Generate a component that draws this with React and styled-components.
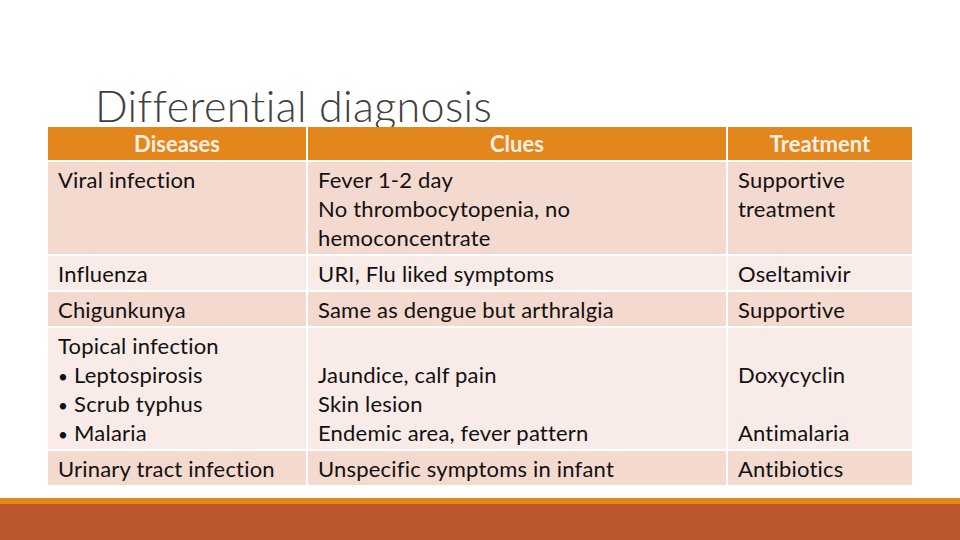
import React from 'react';
import styled, { createGlobalStyle } from 'styled-components';

const Global = createGlobalStyle`
  html, body { margin: 0; padding: 0; background: #fff; }
  body { font-family: Lato, "Open Sans", sans-serif; }
`;

const Slide = styled.div`width: 960px; height: 540px; display: flex; flex-direction: column; overflow: hidden; background: #fff;`;
const Title = styled.h1`margin: 0 0 0 95px; padding-top: 80px; font-family: Lato, sans-serif; font-weight: 300; font-size: 43px; line-height: 52px; color: #404040; height: 47px; overflow: hidden; letter-spacing: 0.4px; white-space: nowrap;`;
const Table = styled.div`position: relative; margin-left: 48px; display: grid; grid-template-columns: 258px 418px 184px; grid-template-rows: 33px 92px 34px 34px 121px 34px; gap: 2px; width: 864px;`;
const Head = styled.div`background: #e3861b; color: #fdf1e6; font-weight: 700; font-size: 22px; display: flex; align-items: center; justify-content: center; padding-bottom: 1px;`;
const Cell = styled.div`background: ${(p) => (p.$light ? '#f9ebe7' : '#f4d9cf')}; color: #111; font-size: 22px; letter-spacing: 0.2px; line-height: 29px; padding: 3px 9px 0 10px; white-space: pre;`;
const Line = styled.div`height: 29px;`;
const Bullet = styled.span`font-size: 17px; margin-right: 6px;`;
const Spacer = styled.div`flex: 1;`;
const Stripe = styled.div`height: 6px; background: #e3861b;`;
const Band = styled.div`height: 36px; background: #bd582c;`;

const rows = [
  [['Viral infection'], ['Fever 1-2 day', 'No thrombocytopenia, no', 'hemoconcentrate'], ['Supportive', 'treatment']],
  [['Influenza'], ['URI, Flu liked symptoms'], ['Oseltamivir']],
  [['Chigunkunya'], ['Same as dengue but arthralgia'], ['Supportive']],
  [['Topical infection', '*Leptospirosis', '*Scrub typhus', '*Malaria'], ['', 'Jaundice, calf pain', 'Skin lesion', 'Endemic area, fever pattern'], ['', 'Doxycyclin', '', 'Antimalaria']],
  [['Urinary tract infection'], ['Unspecific symptoms in infant'], ['Antibiotics']],
];

const App = () => (
  <>
    <Global />
    <Slide>
      <Title>Differential diagnosis</Title>
      <Table>
        <Head>Diseases</Head>
        <Head>Clues</Head>
        <Head>Treatment</Head>
        {rows.map((r, i) => r.map((lines, j) => (
          <Cell key={`${i}-${j}`} $light={i % 2 === 1}>
            {lines.map((t, k) => (
              <Line key={k}>
                {t.startsWith('*') ? (<><Bullet>{'\u2022'}</Bullet>{t.slice(1)}</>) : t}
              </Line>
            ))}
          </Cell>
        )))}
      </Table>
      <Spacer />
      <Stripe />
      <Band />
    </Slide>
  </>
);

export default App;
